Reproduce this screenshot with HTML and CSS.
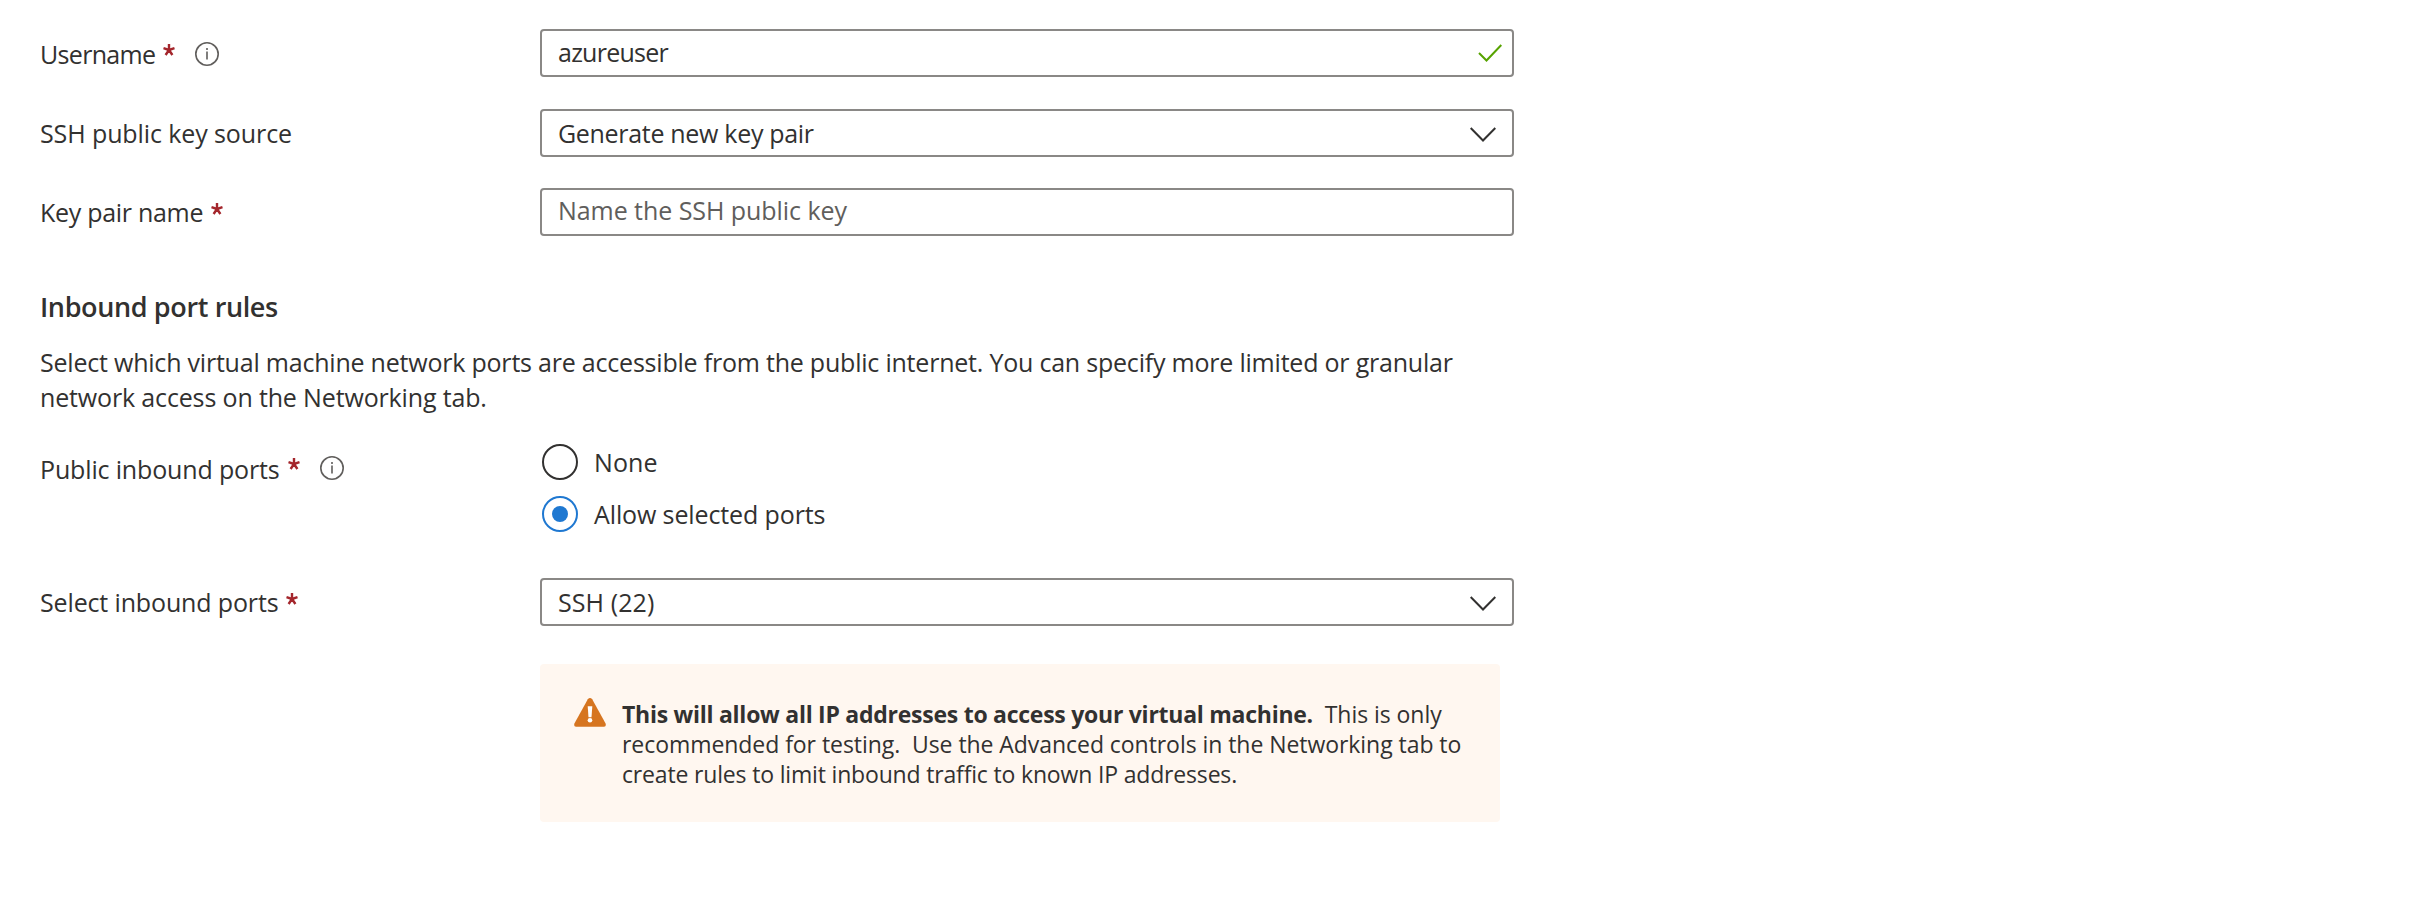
FILE: index.html
```html
<!DOCTYPE html>
<html lang="en">
<head>
<meta charset="utf-8">
<title>Create a virtual machine</title>
<link rel="stylesheet" href="styles.css">
</head>
<body>
<main class="form">
  <div class="row">
    <div class="label"><span class="t-user">Username</span><span class="req"><svg width="12" height="12" viewBox="0 0 12 12"><path d="M6 0v6M6 6L.5 4.2M6 6l5.500-1.800M6 6l-3.400 5M6 6l3.400 5"/></svg></span><svg class="info" width="24" height="24" viewBox="0 0 24 24"><circle cx="12" cy="12" r="11.200"/><path d="M12 9.500v8M12 6v2"/></svg></div>
    <div class="field"><span class="value t-azure">azureuser</span><svg class="check" width="24" height="18" viewBox="0 0 24 18"><path d="M1 9l7.500 7.500L23.300 1"/></svg></div>
  </div>
  <div class="row row-source">
    <div class="label"><span class="t-source">SSH public key source</span></div>
    <div class="field"><span class="value t-generate">Generate new key pair</span><svg class="chevron" width="26" height="15" viewBox="0 0 26 15"><path d="M.7 1L13 13.500 25.300 1"/></svg></div>
  </div>
  <div class="row row-name">
    <div class="label"><span class="t-name">Key pair name</span><span class="req"><svg width="12" height="12" viewBox="0 0 12 12"><path d="M6 0v6M6 6L.5 4.2M6 6l5.500-1.800M6 6l-3.400 5M6 6l3.400 5"/></svg></span></div>
    <div class="field"><span class="value placeholder">Name the SSH public key</span></div>
  </div>
  <h2 class="heading">Inbound port rules</h2>
  <p class="intro">Select which virtual machine network ports are accessible from the public internet. You can specify more limited or granular<br><span class="intro-end">network access on the Networking tab.</span></p>
  <div class="row row-public">
    <div class="label"><span class="t-public">Public inbound ports</span><span class="req"><svg width="12" height="12" viewBox="0 0 12 12"><path d="M6 0v6M6 6L.5 4.2M6 6l5.500-1.800M6 6l-3.400 5M6 6l3.400 5"/></svg></span><svg class="info" width="24" height="24" viewBox="0 0 24 24"><circle cx="12" cy="12" r="11.200"/><path d="M12 9.500v8M12 6v2"/></svg></div>
    <div class="radios">
      <div class="option"><span class="radio"></span><span class="t-none">None</span></div>
      <div class="option"><span class="radio selected"></span><span class="t-allow">Allow selected ports</span></div>
    </div>
  </div>
  <div class="row row-ports">
    <div class="label"><span class="t-select">Select inbound ports</span><span class="req"><svg width="12" height="12" viewBox="0 0 12 12"><path d="M6 0v6M6 6L.5 4.2M6 6l5.500-1.800M6 6l-3.400 5M6 6l3.400 5"/></svg></span></div>
    <div class="field"><span class="value t-ssh">SSH (22)</span><svg class="chevron" width="26" height="15" viewBox="0 0 26 15"><path d="M.7 1L13 13.500 25.300 1"/></svg></div>
  </div>
  <div class="warning">
    <svg class="triangle" width="32" height="29" viewBox="0 0 32 29"><path class="tri" d="M13.800 1.300Q16-1.200 18.200 1.300L31.600 25.500Q32.500 28.600 30 28.800H2Q-.5 28.600.4 25.500Z"/><path class="mark" d="M13.700 8.200h4.600l-.8 11h-3z"/><circle class="mark" cx="16" cy="22.300" r="2.300"/></svg>
    <p class="message"><strong>This will allow all IP addresses to access your virtual machine.</strong><span class="m1">&nbsp; This is only</span><br><span class="m2">recommended for testing.&nbsp; Use the Advanced controls in the Networking tab to</span><br><span class="m3">create rules to limit inbound traffic to known IP addresses.</span></p>
  </div>
</main>
</body>
</html>
```
FILE: styles.css
```css
* { box-sizing: border-box; }
body {
  margin: 0;
  background: #fff;
  color: #323130;
  font: 25px/48px "Open Sans", "Noto Sans", sans-serif;
}
svg { display: block; flex: none; fill: none; }
.form { width: 1514px; padding: 29px 0 0 40px; }
.row { display: grid; grid-template-columns: 500px 974px; }
.row-source { margin-top: 32px; }
.row-name { margin-top: 31px; }
.row-public { margin-top: 29px; }
.row-ports { margin-top: 46px; }
.label { display: flex; height: 48px; white-space: nowrap; }
.req { padding: 15px 0 0 8px; }
.req svg { stroke: #a4262c; stroke-width: 2.4; }
.info { margin: 13px 0 0 20px; stroke: #605e5c; stroke-width: 1.600; }
.row-public .info { margin-top: 12px; }
.row-public .req { padding-top: 14px; }
.field {
  display: flex;
  align-items: center;
  justify-content: space-between;
  height: 48px;
  padding-left: 16px;
  border: 2px solid #8a8886;
  border-radius: 4px;
  line-height: 44px;
}
.check { margin-right: 10px; stroke: #57a300; stroke-width: 2; }
.chevron { margin: 2px 16px 0 0; stroke: #323130; stroke-width: 2; }
.t-user { padding-top: 1px; letter-spacing: -.68px; }
.t-source { letter-spacing: -.1px; }
.t-name { letter-spacing: -.29px; }
.t-azure { letter-spacing: -.75px; padding-bottom: 2px; }
.t-generate { letter-spacing: -.31px; }
.placeholder { color: #605e5c; letter-spacing: -.055px; padding-bottom: 4px; }
.t-public { padding-top: 1px; letter-spacing: -.15px; }
.t-select { letter-spacing: -.14px; }
.t-none { letter-spacing: .1px; }
.t-allow { letter-spacing: -.12px; }
.t-ssh { letter-spacing: .1px; }
.heading {
  margin: 53px 0 21px;
  font-size: 27px;
  font-weight: 600;
  line-height: 35px;
  letter-spacing: -.37px;
}
.intro { margin: 0; line-height: 35px; letter-spacing: -.212px; white-space: nowrap; }
.intro-end { letter-spacing: -.15px; }
.radios { display: grid; gap: 16px; padding-left: 2px; }
.option { display: flex; gap: 16px; height: 36px; line-height: 36px; }
.radio {
  display: grid;
  place-items: center;
  width: 36px;
  height: 36px;
  border: 2px solid #323130;
  border-radius: 50%;
}
.selected { border-color: #1f78d1; }
.selected::after {
  content: "";
  width: 16px;
  height: 16px;
  border-radius: 50%;
  background: #1f78d1;
}
.warning {
  display: flex;
  gap: 16px;
  width: 960px;
  height: 158px;
  margin: 38px 0 0 500px;
  padding: 34px 0 0 34px;
  border-radius: 4px;
  background: #fff7f0;
}
.tri { fill: #d67520; }
.mark { fill: #fff; }
.message { margin: 1px 0 0; font-size: 23px; line-height: 30px; white-space: nowrap; }
.message strong { letter-spacing: -.26px; }
.m1 { letter-spacing: -.05px; }
.m2 { letter-spacing: -.055px; }
.m3 { letter-spacing: -.17px; }
```
